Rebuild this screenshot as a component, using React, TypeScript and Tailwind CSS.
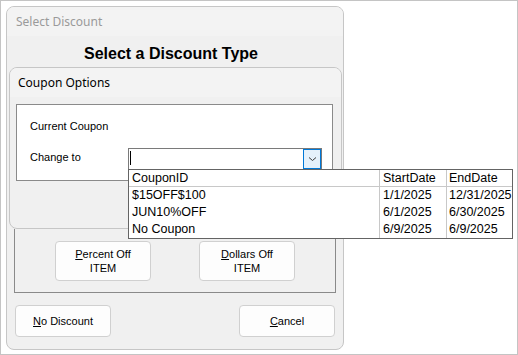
import React from "react";

const rows = [
  { id: "$15OFF$100", start: "1/1/2025", end: "12/31/2025" },
  { id: "JUN10%OFF", start: "6/1/2025", end: "6/30/2025" },
  { id: "No Coupon", start: "6/9/2025", end: "6/9/2025" },
];

function WinButton({ children, className = "" }: { children: React.ReactNode; className?: string }) {
  return (
    <button
      className={`flex flex-col items-center justify-center rounded-[4px] border border-[#d0d0d0] bg-[#fdfdfd] text-[11px] leading-[14px] text-black font-['Liberation_Sans',Arial,sans-serif] ${className}`}
    >
      {children}
    </button>
  );
}

function CouponList() {
  return (
    <div className="absolute left-[-1px] top-[20px] z-10 h-[70px] w-[385px] overflow-hidden border border-[#646464] bg-white font-['Liberation_Sans',Arial,sans-serif] text-[12.5px] leading-[17px] text-black">
      <div className="flex h-[17px] border-b border-[#c8c8c8]">
        <div className="w-[251px] border-r border-[#c8c8c8] pl-[3px] leading-[16px]">CouponID</div>
        <div className="w-[67px] border-r border-[#c8c8c8] pl-[3px] leading-[16px]">StartDate</div>
        <div className="flex-1 whitespace-nowrap pl-[2px] leading-[16px]">EndDate</div>
      </div>
      {rows.map((r) => (
        <div key={r.id} className="flex h-[17px]">
          <div className="w-[251px] border-r border-[#c8c8c8] pl-[3px]">{r.id}</div>
          <div className="w-[67px] border-r border-[#c8c8c8] pl-[3px]">{r.start}</div>
          <div className="flex-1 whitespace-nowrap pl-[2px]">{r.end}</div>
        </div>
      ))}
    </div>
  );
}

export default function App() {
  return (
    <div className="h-[355px] w-[518px] border border-[#c4c4c4] bg-white pl-[5px] pt-[5px]">
      <div className="h-[344px] w-[338px] rounded-[8px] border border-[#c6c6c6] bg-[#f0f0f0]">
        {/* title bar */}
        <div className="h-[29px] rounded-t-[7px] bg-[#f3f3f3] pl-[9px] font-['Noto_Sans',sans-serif] text-[12px] leading-[29px] text-[#9a9a9a]">
          Select Discount
        </div>

        <div className="h-[31px] pt-[8px] pr-[8px] text-center font-['Liberation_Sans',Arial,sans-serif] text-[16px] font-bold leading-[20px] text-black">
          Select a Discount Type
        </div>

        {/* coupon options group */}
        <div className="ml-[2px] h-[162px] w-[333px] rounded-[8px] border border-[#c6c6c6] bg-[#f0f0f0]">
          <div className="h-[29px] rounded-t-[7px] bg-[#f3f3f3] pl-[8px] font-['Noto_Sans',sans-serif] text-[12px] leading-[29px] text-black">
            Coupon Options
          </div>
          <div className="ml-[6px] mt-[7px] h-[77px] w-[317px] border border-[#8a8a8a] bg-white font-['Liberation_Sans',Arial,sans-serif] text-[11px] text-black">
            <div className="mt-[14px] pl-[13px] leading-[14px]">Current Coupon</div>
            <div className="mt-[15px] flex items-start pl-[13px]">
              <div className="w-[98px] pt-[2px] leading-[14px]">Change to</div>
              <div className="relative flex h-[22px] w-[194px] items-stretch border border-[#7a7a7a] bg-white">
                <div className="flex-1 pl-[1px] pt-[2px]">
                  <div className="h-[14px] w-px bg-black" />
                </div>
                <div className="flex w-[18px] items-center justify-center border border-[#0078d7] bg-[#e5f1fb]">
                  <svg width="9" height="6" viewBox="0 0 9 6">
                    <path d="M1 1.5 L4.5 4.5 L8 1.5" fill="none" stroke="#3c3c3c" strokeWidth="1" />
                  </svg>
                </div>
                <CouponList />
              </div>
            </div>
          </div>
        </div>

        {/* discount type box */}
        <div className="ml-[7px] flex h-[64px] w-[322px] border-x border-b border-[#8a8a8a] pt-[12px]">
          <WinButton className="ml-[40px] h-[40px] w-[96px]">
            <span>
              <span className="underline">P</span>ercent Off
            </span>
            <span>ITEM</span>
          </WinButton>
          <WinButton className="ml-[48px] h-[40px] w-[96px]">
            <span>
              <span className="underline">D</span>ollars Off
            </span>
            <span>ITEM</span>
          </WinButton>
        </div>

        <div className="mt-[12px] flex">
          <WinButton className="ml-[8px] h-[32px] w-[96px]">
            <span>
              <span className="underline">N</span>o Discount
            </span>
          </WinButton>
          <WinButton className="ml-[128px] h-[32px] w-[96px]">
            <span>
              <span className="underline">C</span>ancel
            </span>
          </WinButton>
        </div>
      </div>
    </div>
  );
}
